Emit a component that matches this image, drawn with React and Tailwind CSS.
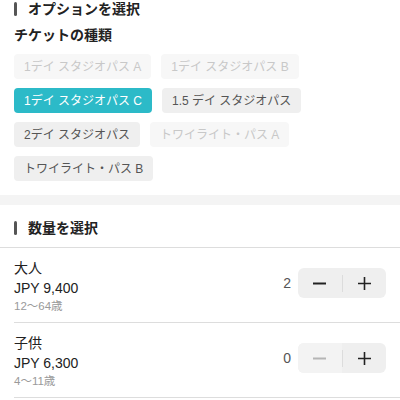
import React from "react";

const chips = [
  { label: "1デイ スタジオパス A", state: "disabled" },
  { label: "1デイ スタジオパス B", state: "disabled" },
  { label: "1デイ スタジオパス C", state: "active" },
  { label: "1.5 デイ スタジオパス", state: "normal" },
  { label: "2デイ スタジオパス", state: "normal" },
  { label: "トワイライト・パス A", state: "disabled" },
  { label: "トワイライト・パス B", state: "normal" },
];

function Chip({ label, state }) {
  const cls =
    state === "active"
      ? "bg-[#2cbac8] text-white"
      : state === "disabled"
      ? "bg-[#f7f7f7] text-[#c8c8c8]"
      : "bg-[#efefef] text-[#555555]";
  return (
    <div className={`h-[25px] px-[10px] rounded-[4px] flex items-center text-[12px] leading-none ${cls}`}>
      {label}
    </div>
  );
}

function SectionHead({ children }) {
  return (
    <div className="flex items-center gap-[11px]">
      <div className="w-[3px] h-[14px] rounded-full bg-[#555555]" />
      <div className="text-[14px] font-bold text-[#222222] leading-[16px]">{children}</div>
    </div>
  );
}

function Minus({ color }) {
  return (
    <svg width="15" height="15" viewBox="0 0 15 15">
      <path d="M1 7.5 H14" stroke={color} strokeWidth="2" />
    </svg>
  );
}
function Plus({ color }) {
  return (
    <svg width="15" height="15" viewBox="0 0 15 15">
      <path d="M1 7.5 H14 M7.5 1 V14" stroke={color} strokeWidth="1.6" />
    </svg>
  );
}

function Row({ name, price, age, qty, minusDisabled }) {
  return (
    <div className="flex items-start ml-[14px] border-b border-[#dddddd] pr-[14px]">
      <div className="flex-1 pt-[10px] pb-[8px]">
        <div className="text-[14px] leading-[20px] text-[#222222]">{name}</div>
        <div className="text-[14px] leading-[20px] text-[#222222]">{price}</div>
        <div className="text-[11.5px] leading-[16px] text-[#9a9a9a]">{age}</div>
      </div>
      <div className="flex items-center gap-[7px] mt-[20px]">
        <div className="text-[14px] text-[#555555]">{qty}</div>
        <div className="flex items-center w-[88px] h-[30px] rounded-[6px] bg-[#efefef]">
          <div className={`flex-1 h-full flex items-center justify-center rounded-l-[6px] ${minusDisabled ? "bg-[#f3f3f3]" : ""}`}>
            <Minus color={minusDisabled ? "#b5b5b5" : "#222222"} />
          </div>
          <div className="w-px h-[17px] bg-[#dcdcdc]" />
          <div className="flex-1 h-full flex items-center justify-center">
            <Plus color="#222222" />
          </div>
        </div>
      </div>
    </div>
  );
}

export default function App() {
  return (
    <div
      className="w-[400px] h-[400px] overflow-hidden bg-white"
      style={{ fontFamily: '"Liberation Sans", "Noto Sans CJK JP", sans-serif' }}
    >
      <div className="px-[14px]">
        <div className="pt-px">
          <SectionHead>オプションを選択</SectionHead>
        </div>
        <div className="mt-[10px] text-[14px] font-bold text-[#222222] leading-[16px]">チケットの種類</div>
        <div className="mt-[11px] flex flex-wrap gap-x-[10px] gap-y-[9px] pb-[14px]">
          {chips.map((c) => (
            <Chip key={c.label} {...c} />
          ))}
        </div>
      </div>
      <div className="h-[10px] bg-[#f4f4f4]" />
      <div className="px-[14px] pt-[15px] pb-[11px]">
        <SectionHead>数量を選択</SectionHead>
      </div>
      <div className="border-t border-[#dddddd]">
        <Row name="大人" price="JPY 9,400" age="12～64歳" qty="2" />
        <Row name="子供" price="JPY 6,300" age="4～11歳" qty="0" minusDisabled />
      </div>
    </div>
  );
}
